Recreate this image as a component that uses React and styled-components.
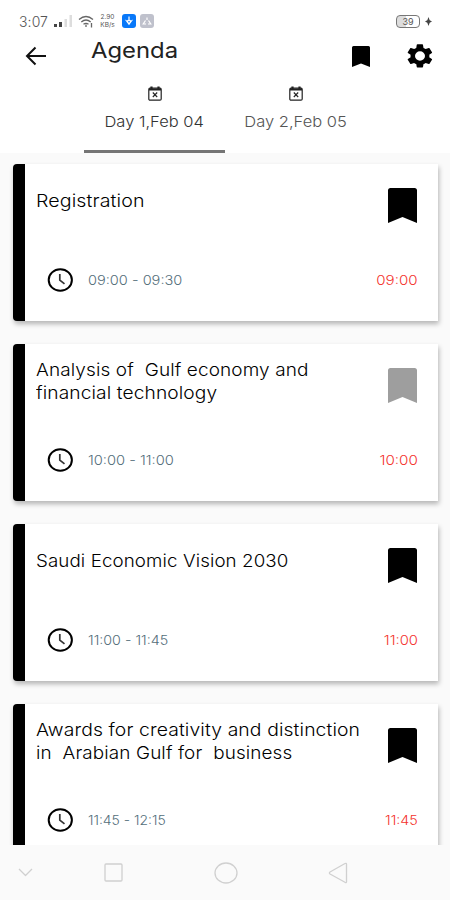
import React from 'react'
import styled, { createGlobalStyle } from 'styled-components';

const GlobalStyle = createGlobalStyle`
    * {
        box-sizing: border-box;
    }
    body {
        margin: 0;
        background: #fafafa;
        font-family: Inter, "Open Sans", sans-serif;
    }
    svg {
        display: block;
        flex-shrink: 0;
    }
`

const Screen = styled.div`
    display: flex;
    flex-direction: column;
    width: 450px;
    height: 900px;
    overflow: hidden;
    background: #fafafa;
`

const Header = styled.header`
    flex: none;
    height: 153px;
    background: #fff;
`

const StatusBar = styled.div`
    display: flex;
    align-items: center;
    height: 36px;
    padding: 6px 18px 0 19px;
    color: #555;
`

const Clock = styled.span`
    width: 35px;
    font-size: 14px;
    font-weight: 300;
    letter-spacing: 0.1px;
`

const Signal = styled.svg`
    margin-right: 5px;
`

const Speed = styled.span`
    display: flex;
    flex-direction: column;
    width: 19px;
    margin-left: 4px;
    font-size: 6.5px;
    line-height: 8px;
    text-align: center;
    color: #555;
`

const AppBadge = styled.span`
    display: flex;
    align-items: center;
    justify-content: center;
    width: 14px;
    height: 14px;
    margin-left: ${props => props.$gap}px;
    border-radius: 3px;
    background: ${props => props.$color};
`

const Battery = styled.span`
    display: flex;
    align-items: center;
    justify-content: center;
    width: 24px;
    height: 13px;
    margin-left: auto;
    margin-right: 5px;
    border: 1px solid #777;
    border-radius: 4px;
    background: linear-gradient(90deg, #ddd 39%, #fff 39%);
    font-size: 9px;
    line-height: 11px;
`

const TitleBar = styled.div`
    display: flex;
    align-items: center;
    height: 40px;
    padding: 0 15px 0 25px;
`

const Title = styled.h1`
    flex: 1;
    margin: -13px 0 0 43.5px;
    font-size: 21.5px;
    font-weight: 400;
    line-height: 28px;
    color: #222;
    transform: scaleX(1.11);
    transform-origin: left;
`

const GearIcon = styled.svg`
    margin-left: 35.5px;
`

const Tabs = styled.nav`
    display: flex;
    height: 77px;
    padding-left: 84px;
`

const Tab = styled.div`
    display: flex;
    flex-direction: column;
    align-items: center;
    width: 141px;
    padding-top: 10px;
    border-bottom: 3px solid ${props => props.$active ? '#757575' : 'transparent'};
    color: ${props => props.$active ? '#333' : '#555'};
`

const TabLabel = styled.span`
    margin-top: 10.5px;
    font-size: 15px;
    font-weight: 300;
    line-height: 20px;
    white-space: nowrap;
    transform: scaleX(1.1);
`

const List = styled.main`
    display: flex;
    flex: 1;
    flex-direction: column;
    gap: 23px;
    min-height: 0;
    padding: 11px 12px 0 13px;
    overflow: hidden;
`

const Card = styled.article`
    display: flex;
    flex: none;
    flex-direction: column;
    justify-content: space-between;
    height: 157px;
    padding: 13.6px 20.5px 27px 11px;
    border-left: 12.5px solid #000;
    border-radius: 4px 0 0 4px;
    background: #fff;
    box-shadow: 1px 3px 5px rgba(0, 0, 0, 0.28);
`

const CardTop = styled.div`
    display: flex;
    justify-content: space-between;
    height: 60px;
`

const CardTitle = styled.h2`
    display: flex;
    flex-direction: column;
    align-items: flex-start;
    justify-content: center;
    height: 46px;
    margin: 0;
    font-size: 17.5px;
    font-weight: 300;
    line-height: 23px;
    color: #000;
`

const Line = styled.span`
    letter-spacing: 0.1px;
    white-space: pre;
    transform: scaleX(${props => props.$stretch});
    transform-origin: left;
`

const CardBottom = styled.div`
    display: flex;
    align-items: center;
    height: 28px;
    padding-left: 11px;
`

const Time = styled.span`
    font-size: 13px;
    font-weight: 300;
    transform: scaleX(${props => props.$stretch});
`

const Range = styled(Time)`
    margin-left: 15px;
    color: #546e7a;
    transform-origin: left;
`

const Start = styled(Time)`
    margin-left: auto;
    color: #f4322c;
    transform-origin: right;
`

const NavBar = styled.footer`
    display: flex;
    flex: none;
    align-items: center;
    height: 55px;
    padding: 0 0 0 18px;
    background: #fafafa;
`

const NavIcon = styled.svg`
    margin-right: ${props => props.$gap}px;
    fill: none;
    stroke: #d0d0d0;
    stroke-width: 1.3;
    stroke-linejoin: round;
`

const Bookmark = ({ width, height, color }) => (
    <svg width={width} height={height} viewBox="0 0 29 35" preserveAspectRatio="none">
        <path d="M2.5 0H26.5Q29 0 29 2.5V35L14.5 29L0 35V2.5Q0 0 2.5 0Z" fill={color} />
    </svg>
)

const CardBookmark = styled.div`
    padding: 10.4px 0.5px 0 0;
`

const ClockIcon = () => (
    <svg width="26" height="24" viewBox="0 0 26 24" fill="none" stroke="#000">
        <ellipse cx="13.3" cy="12" rx="11.6" ry="10.8" strokeWidth="2" />
        <path d="M12.8 6V12.2L17.5 15.8" stroke="#333" strokeWidth="1.7" />
    </svg>
)

const CalendarIcon = () => (
    <svg width="14" height="15" viewBox="0 0 14 15" fill="none" stroke="#222">
        <rect x="0.8" y="2.2" width="12.4" height="12" rx="1.2" strokeWidth="1.2" />
        <path d="M1 3.5H13M3.5 0.5V3M10.5 0.5V3" strokeWidth="2.2" />
        <path d="M4.8 6.5L9.2 11M9.2 6.5L4.8 11" strokeWidth="1.1" />
    </svg>
)

const sessions = [
    {
        lines: [{ text: 'Registration', stretch: 1.12 }],
        range: '09:00 - 09:30',
        rangeStretch: 1.12,
        start: '09:00',
        startStretch: 1.16,
        saved: true,
    },
    {
        lines: [
            { text: 'Analysis of  Gulf economy and', stretch: 1.085 },
            { text: 'financial technology', stretch: 1.095 },
        ],
        range: '10:00 - 11:00',
        rangeStretch: 1.13,
        start: '10:00',
        startStretch: 1.17,
        saved: false,
    },
    {
        lines: [{ text: 'Saudi Economic Vision 2030', stretch: 1.07 }],
        range: '11:00 - 11:45',
        rangeStretch: 1.1,
        start: '11:00',
        startStretch: 1.14,
        saved: true,
    },
    {
        lines: [
            { text: 'Awards for creativity and distinction', stretch: 1.105 },
            { text: 'in  Arabian Gulf for  business', stretch: 1.08 },
        ],
        range: '11:45 - 12:15',
        rangeStretch: 1.07,
        start: '11:45',
        startStretch: 1.1,
        saved: true,
    },
]

const Session = ({ session }) => (
    <Card>
        <CardTop>
            <CardTitle>
                {session.lines.map(line => <Line key={line.text} $stretch={line.stretch}>{line.text}</Line>)}
            </CardTitle>
            <CardBookmark>
                <Bookmark width={29} height={35} color={session.saved ? '#000' : '#9e9e9e'} />
            </CardBookmark>
        </CardTop>
        <CardBottom>
            <ClockIcon />
            <Range $stretch={session.rangeStretch}>{session.range}</Range>
            <Start $stretch={session.startStretch}>{session.start}</Start>
        </CardBottom>
    </Card>
)

const App = () => {
    return (
        <Screen>
            <GlobalStyle />
            <Header>
                <StatusBar>
                    <Clock>3:07</Clock>
                    <Signal width="19" height="12" viewBox="0 0 19 12">
                        <path d="M0 9H3V12H0ZM5 7H8V12H5Z" fill="#444" />
                        <path d="M10.5 4H13V12H10.5ZM15.5 0H18V12H15.5Z" fill="#ddd" />
                    </Signal>
                    <svg width="16" height="13" viewBox="0 0 16 13" fill="none" stroke="#666" strokeWidth="1.3">
                        <path d="M1 4.5Q8 -1.5 15 4.5M3.3 7Q8 3 12.7 7M5.5 9.3Q8 7.3 10.5 9.3" />
                        <path d="M8 9.5V12M13.5 8V12.5" />
                    </svg>
                    <Speed>
                        <span>2.90</span>
                        <span>KB/s</span>
                    </Speed>
                    <AppBadge $color="#0878f9" $gap={5}>
                        <svg width="10" height="10" viewBox="0 0 10 10" fill="#fff">
                            <path d="M4.4 0.5H5.6V3H4.4ZM0.8 3.5L3 4.5L5 3L7 4.5L9.2 3.5L5 9.2ZM5 4.7L4 5.7L5 6.8L6 5.7Z" fillRule="evenodd" />
                        </svg>
                    </AppBadge>
                    <AppBadge $color="#bfc1cc" $gap={4}>
                        <svg width="10" height="10" viewBox="0 0 10 10" fill="none" stroke="#fff" strokeWidth="1.2">
                            <path d="M5 1.5V4M3.5 4.5L1.2 8H4M6.5 4.5L8.8 8H6" />
                        </svg>
                    </AppBadge>
                    <Battery>39</Battery>
                    <svg width="7" height="9" viewBox="0 0 7 9">
                        <path d="M3.5 0L4.7 3.2L7 4.5L4.7 5.8L3.5 9L2.3 5.8L0 4.5L2.3 3.2Z" fill="#444" />
                    </svg>
                </StatusBar>
                <TitleBar>
                    <svg width="22" height="20" viewBox="0 0 22 20" fill="none" stroke="#111" strokeWidth="2">
                        <path d="M21 10H2.5M10.5 1.5L2 10L10.5 18.5" />
                    </svg>
                    <Title>Agenda</Title>
                    <Bookmark width={18} height={21} color="#000" />
                    <GearIcon width="30" height="28" viewBox="0 0 24 24" preserveAspectRatio="none">
                        <path d="M19.4 13c0-.3.1-.6.1-1s0-.7-.1-1l2.1-1.6c.2-.2.2-.4.1-.6l-2-3.5c-.1-.2-.4-.3-.6-.2l-2.5 1c-.5-.4-1.1-.7-1.7-1l-.4-2.6c0-.3-.2-.5-.5-.5h-4c-.2 0-.4.2-.5.4L9 5.1c-.6.2-1.1.6-1.7 1l-2.5-1c-.2-.1-.5 0-.6.2l-2 3.5c-.1.2-.1.4.1.6L4.5 11c0 .3-.1.7-.1 1s0 .7.1 1l-2.2 1.6c-.2.2-.2.4-.1.6l2 3.5c.1.2.4.3.6.2l2.5-1c.5.4 1.1.7 1.7 1l.4 2.6c0 .2.2.4.5.4h4c.2 0 .5-.2.5-.4l.4-2.6c.6-.2 1.1-.6 1.7-1l2.5 1c.2.1.5 0 .6-.2l2-3.5c.1-.2.1-.4-.1-.6zM12 16a4 4 0 1 1 0-8 4 4 0 0 1 0 8z" fill="#000" />
                    </GearIcon>
                </TitleBar>
                <Tabs>
                    <Tab $active>
                        <CalendarIcon />
                        <TabLabel>Day 1,Feb 04</TabLabel>
                    </Tab>
                    <Tab>
                        <CalendarIcon />
                        <TabLabel>Day 2,Feb 05</TabLabel>
                    </Tab>
                </Tabs>
            </Header>
            <List>
                {sessions.map(session => <Session key={session.start} session={session} />)}
            </List>
            <NavBar>
                <NavIcon $gap={70.5} width="15" height="9" viewBox="0 0 15 9">
                    <path d="M1 1L7.5 7.5L14 1" />
                </NavIcon>
                <NavIcon $gap={91.5} width="19" height="19" viewBox="0 0 19 19">
                    <rect x="1" y="1" width="17" height="17" rx="1" />
                </NavIcon>
                <NavIcon $gap={90} width="24" height="22" viewBox="0 0 24 22">
                    <ellipse cx="12" cy="11" rx="11" ry="10" />
                </NavIcon>
                <NavIcon $gap={0} width="20" height="22" viewBox="0 0 20 22">
                    <path d="M18.5 2V20Q18.5 21 17 20.3L2 12Q0.8 11 2 10L17 1.5Q18.5 1 18.5 2Z" />
                </NavIcon>
            </NavBar>
        </Screen>
    )
}

export default App
